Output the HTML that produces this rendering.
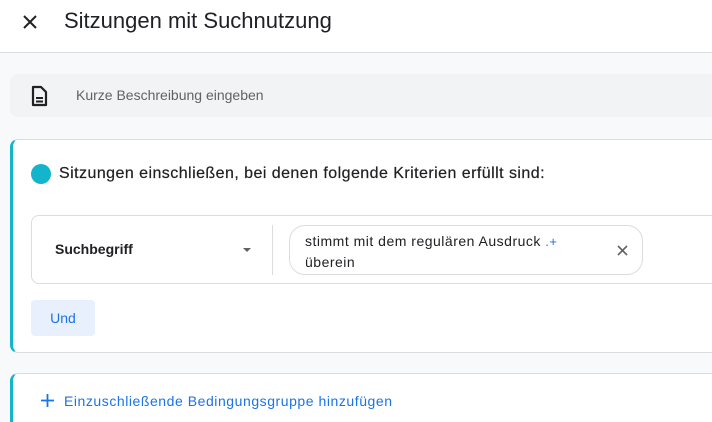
<!DOCTYPE html>
<html><head><meta charset="utf-8"><style>
*{margin:0;padding:0;box-sizing:border-box}
html,body{width:712px;height:422px;overflow:hidden}
body{background:#f8f9fa;font-family:"Liberation Sans",Arial,sans-serif;position:relative;color:#202124}
.hdr{position:absolute;left:0;top:0;width:712px;height:53px;background:#fff;border-bottom:1px solid #dadce0}
.ttl{position:absolute;left:64px;top:8px;font-size:22px;color:#202124}
.desc{position:absolute;left:10px;top:74px;width:702px;height:43px;background:#f1f3f4;border-radius:8px 0 0 8px}
.desc span{position:absolute;left:66px;top:13px;font-size:14px;color:#5f6368}
.card{position:absolute;left:10px;width:702px;background:#fff;border:1px solid #dadce0;border-right:none;border-left:3px solid #12b5cb;border-radius:8px 0 0 8px}
.dot{position:absolute;left:18px;top:24px;width:20px;height:20px;border-radius:50%;background:#12b5cb}
.ctitle{position:absolute;left:46px;top:25px;font-size:16px;letter-spacing:0.45px;color:#202124;-webkit-text-stroke:0.2px #202124}
.row{position:absolute;left:18px;top:75px;width:681px;height:69px;border:1px solid #dadce0;border-right:none;border-radius:8px 0 0 8px}
.sb{position:absolute;left:23px;top:25px;font-size:14px;font-weight:bold;color:#202124}
.arr{position:absolute;left:211px;top:32px;width:0;height:0;border-left:4px solid transparent;border-right:4px solid transparent;border-top:4px solid #5f6368}
.div{position:absolute;left:240px;top:9px;width:1px;height:50px;background:#dadce0}
.pill{position:absolute;left:257px;top:9px;width:354px;height:50px;border:1px solid #dadce0;border-radius:16px}
.pill .t{position:absolute;left:15px;top:5px;font-size:14px;letter-spacing:0.5px;line-height:21px;color:#202124}
.und{position:absolute;left:18px;top:160px;width:64px;height:36px;background:#e8f0fe;border-radius:4px;color:#1a73e8;font-size:14px;text-align:center;line-height:36px}
</style></head><body>
<div class="hdr">
<svg style="position:absolute;left:22px;top:14px" width="16" height="16" viewBox="0 0 16 16"><path d="M2 2L14 14M14 2L2 14" stroke="#202124" stroke-width="2"/></svg>
<div class="ttl">Sitzungen mit Suchnutzung</div>
</div>
<div class="desc">
<svg style="position:absolute;left:20px;top:11px" width="18" height="22" viewBox="0 0 18 22"><path d="M3 2h8l5 5v13H3z" fill="none" stroke="#202124" stroke-width="2.2" stroke-linejoin="round"/><path d="M6 13h7M6 16.5h7" stroke="#202124" stroke-width="2"/></svg>
<span>Kurze Beschreibung eingeben</span>
</div>
<div class="card" style="top:139px;height:214px">
<div class="dot"></div>
<div class="ctitle">Sitzungen einschließen, bei denen folgende Kriterien erfüllt sind:</div>
<div class="row">
<div class="sb">Suchbegriff</div>
<div class="arr"></div>
<div class="div"></div>
<div class="pill"><div class="t">stimmt mit dem regulären Ausdruck <span style="color:#1a73e8;font-size:13px">.+</span><br>überein</div>
<svg style="position:absolute;left:327px;top:19px" width="11" height="11" viewBox="0 0 11 11"><path d="M1 1L10 10M10 1L1 10" stroke="#5f6368" stroke-width="1.6"/></svg>
</div>
</div>
<div class="und">Und</div>
</div>
<div class="card" style="top:373px;height:49px;border-bottom:none;border-radius:8px 0 0 0">
<svg style="position:absolute;left:28px;top:20px" width="13" height="13" viewBox="0 0 13 13"><path d="M6.5 0V13M0 6.5H13" stroke="#1a73e8" stroke-width="1.8"/></svg>
<div style="position:absolute;left:51px;top:19px;font-size:14px;letter-spacing:0.55px;color:#1a73e8">Einzuschließende Bedingungsgruppe hinzufügen</div>
</div>
</body></html>
